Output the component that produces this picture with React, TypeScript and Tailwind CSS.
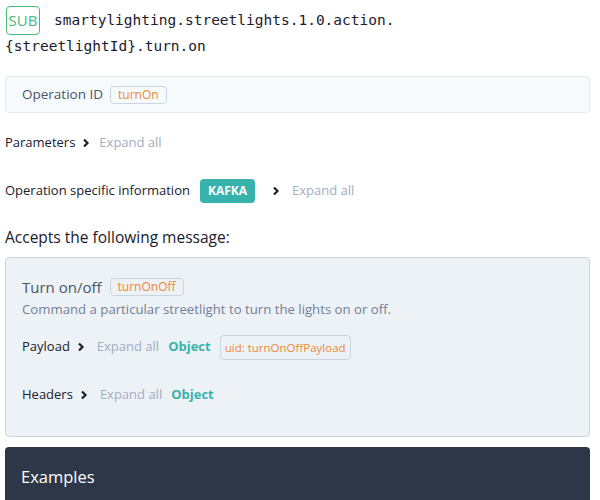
import React from "react";

const Chevron = () => (
  <svg width="10" height="10" viewBox="0 0 10 10" className="shrink-0">
    <path d="M3 1.5 L6.5 5 L3 8.5" fill="none" stroke="#1a202c" strokeWidth="2.2" />
  </svg>
);

export default function App() {
  return (
    <div className="w-[600px] h-[500px] overflow-hidden bg-white text-[#1a202c]" style={{ fontFamily: '"Open Sans", "Noto Sans", sans-serif' }}>
      <div className="pl-[5px] pr-[10px] pt-[6px]">
        <div className="flex items-start">
          <span className="ml-px inline-flex h-[29px] w-[34px] items-center justify-center rounded border border-[#48bb78] text-[15px] text-[#48bb78]">SUB</span>
          <span className="ml-[14px] text-[14.5px] leading-[25px] mt-[2px]" style={{ fontFamily: '"DejaVu Sans Mono", monospace' }}>smartylighting.streetlights.1.0.action.</span>
        </div>
        <div className="text-[14.5px] leading-[25px] -mt-[1px]" style={{ fontFamily: '"DejaVu Sans Mono", monospace' }}>{"{streetlightId}.turn.on"}</div>

        <div className="mt-[17px] flex h-[37px] items-center rounded border border-[#e2e8f0] bg-[#f7fafc] pl-[16px]">
          <span className="text-[13.5px] text-[#4a5568]">Operation ID</span>
          <span className="ml-[7px] rounded border border-[#cbd5e0] px-[7px] text-[12px] leading-[16px] text-[#ed8936]">turnOn</span>
        </div>

        <div className="mt-[20px] flex h-[20px] items-center text-[13px]">
          <span>Parameters</span>
          <span className="ml-[6px]"><Chevron /></span>
          <span className="ml-[8px] text-[#a0aec0]">Expand all</span>
        </div>

        <div className="mt-[26px] flex h-[24px] items-center text-[13px]">
          <span>Operation specific information</span>
          <span className="ml-[10px] inline-flex h-[24px] items-center rounded bg-[#38b2ac] px-[8px] text-[12px] font-bold text-white">KAFKA</span>
          <span className="ml-[16px]"><Chevron /></span>
          <span className="ml-[11px] text-[#a0aec0]">Expand all</span>
        </div>

        <div className="mt-[22px] text-[15.5px] leading-[24px]">Accepts the following message:</div>

        <div className="mt-[8px] h-[180px] rounded border border-[#cbd5e0] bg-[#edf2f7] pl-[16px] pt-[18px]">
          <div className="flex h-[22px] items-center">
            <span className="text-[15px] text-[#4a5568]">Turn on/off</span>
            <span className="ml-[8px] rounded border border-[#cbd5e0] px-[7px] text-[12px] leading-[16px] text-[#ed8936]">turnOnOff</span>
          </div>
          <div className="mt-[1px] text-[13.2px] leading-[20px] text-[#718096]">Command a particular streetlight to turn the lights on or off.</div>
          <div className="mt-[15px] flex h-[26px] items-center text-[13px]">
            <span>Payload</span>
            <span className="ml-[6px]"><Chevron /></span>
            <span className="ml-[11px] text-[#a0aec0]">Expand all</span>
            <span className="ml-[9px] font-bold text-[#38b2ac]">Object</span>
            <span className="ml-[9px] rounded border border-[#cbd5e0] px-[4px] text-[11.5px] leading-[23px] text-[#ed8936]">uid: turnOnOffPayload</span>
          </div>
          <div className="mt-[22px] flex h-[26px] items-center text-[13px]">
            <span>Headers</span>
            <span className="ml-[6px]"><Chevron /></span>
            <span className="ml-[11px] text-[#a0aec0]">Expand all</span>
            <span className="ml-[9px] font-bold text-[#38b2ac]">Object</span>
          </div>
        </div>

        <div className="mt-[10px] h-[80px] rounded-t bg-[#2d3748] pl-[16px] pt-[18px]">
          <span className="text-[16.5px] text-white">Examples</span>
        </div>
      </div>
    </div>
  );
}
